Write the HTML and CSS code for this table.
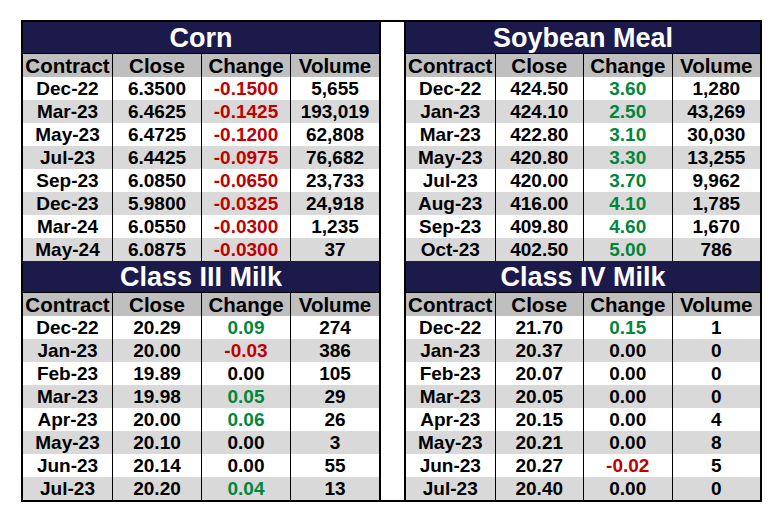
FILE: index.html
```html
<!DOCTYPE html>
<html>
<head>
<meta charset="utf-8">
<link rel="stylesheet" href="styles.css">
</head>
<body>
<div class="board">
  <div class="panel panel-left">
    <section class="grid">
      <div class="title">Corn</div>
      <div class="hd">Contract</div><div class="hd">Close</div><div class="hd">Change</div><div class="hd">Volume</div>
      <div class="c">Dec-22</div><div class="c">6.3500</div><div class="c neg">-0.1500</div><div class="c">5,655</div>
      <div class="c alt">Mar-23</div><div class="c alt">6.4625</div><div class="c alt neg">-0.1425</div><div class="c alt">193,019</div>
      <div class="c">May-23</div><div class="c">6.4725</div><div class="c neg">-0.1200</div><div class="c">62,808</div>
      <div class="c alt">Jul-23</div><div class="c alt">6.4425</div><div class="c alt neg">-0.0975</div><div class="c alt">76,682</div>
      <div class="c">Sep-23</div><div class="c">6.0850</div><div class="c neg">-0.0650</div><div class="c">23,733</div>
      <div class="c alt">Dec-23</div><div class="c alt">5.9800</div><div class="c alt neg">-0.0325</div><div class="c alt">24,918</div>
      <div class="c">Mar-24</div><div class="c">6.0550</div><div class="c neg">-0.0300</div><div class="c">1,235</div>
      <div class="c alt">May-24</div><div class="c alt">6.0875</div><div class="c alt neg">-0.0300</div><div class="c alt">37</div>
    </section>
    <section class="grid">
      <div class="title">Class III Milk</div>
      <div class="hd">Contract</div><div class="hd">Close</div><div class="hd">Change</div><div class="hd">Volume</div>
      <div class="c">Dec-22</div><div class="c">20.29</div><div class="c pos">0.09</div><div class="c">274</div>
      <div class="c alt">Jan-23</div><div class="c alt">20.00</div><div class="c alt neg">-0.03</div><div class="c alt">386</div>
      <div class="c">Feb-23</div><div class="c">19.89</div><div class="c">0.00</div><div class="c">105</div>
      <div class="c alt">Mar-23</div><div class="c alt">19.98</div><div class="c alt pos">0.05</div><div class="c alt">29</div>
      <div class="c">Apr-23</div><div class="c">20.00</div><div class="c pos">0.06</div><div class="c">26</div>
      <div class="c alt">May-23</div><div class="c alt">20.10</div><div class="c alt">0.00</div><div class="c alt">3</div>
      <div class="c">Jun-23</div><div class="c">20.14</div><div class="c">0.00</div><div class="c">55</div>
      <div class="c alt">Jul-23</div><div class="c alt">20.20</div><div class="c alt pos">0.04</div><div class="c alt">13</div>
    </section>
  </div>
  <div class="spacer"></div>
  <div class="panel panel-right">
    <section class="grid">
      <div class="title">Soybean Meal</div>
      <div class="hd">Contract</div><div class="hd">Close</div><div class="hd">Change</div><div class="hd">Volume</div>
      <div class="c">Dec-22</div><div class="c">424.50</div><div class="c pos">3.60</div><div class="c">1,280</div>
      <div class="c alt">Jan-23</div><div class="c alt">424.10</div><div class="c alt pos">2.50</div><div class="c alt">43,269</div>
      <div class="c">Mar-23</div><div class="c">422.80</div><div class="c pos">3.10</div><div class="c">30,030</div>
      <div class="c alt">May-23</div><div class="c alt">420.80</div><div class="c alt pos">3.30</div><div class="c alt">13,255</div>
      <div class="c">Jul-23</div><div class="c">420.00</div><div class="c pos">3.70</div><div class="c">9,962</div>
      <div class="c alt">Aug-23</div><div class="c alt">416.00</div><div class="c alt pos">4.10</div><div class="c alt">1,785</div>
      <div class="c">Sep-23</div><div class="c">409.80</div><div class="c pos">4.60</div><div class="c">1,670</div>
      <div class="c alt">Oct-23</div><div class="c alt">402.50</div><div class="c alt pos">5.00</div><div class="c alt">786</div>
    </section>
    <section class="grid">
      <div class="title">Class IV Milk</div>
      <div class="hd">Contract</div><div class="hd">Close</div><div class="hd">Change</div><div class="hd">Volume</div>
      <div class="c">Dec-22</div><div class="c">21.70</div><div class="c pos">0.15</div><div class="c">1</div>
      <div class="c alt">Jan-23</div><div class="c alt">20.37</div><div class="c alt">0.00</div><div class="c alt">0</div>
      <div class="c">Feb-23</div><div class="c">20.07</div><div class="c">0.00</div><div class="c">0</div>
      <div class="c alt">Mar-23</div><div class="c alt">20.05</div><div class="c alt">0.00</div><div class="c alt">0</div>
      <div class="c">Apr-23</div><div class="c">20.15</div><div class="c">0.00</div><div class="c">4</div>
      <div class="c alt">May-23</div><div class="c alt">20.21</div><div class="c alt">0.00</div><div class="c alt">8</div>
      <div class="c">Jun-23</div><div class="c">20.27</div><div class="c neg">-0.02</div><div class="c">5</div>
      <div class="c alt">Jul-23</div><div class="c alt">20.40</div><div class="c alt">0.00</div><div class="c alt">0</div>
    </section>
  </div>
</div>
</body>
</html>
```
FILE: styles.css
```css
html, body {
  margin: 0;
  padding: 0;
  background: #ffffff;
}
body {
  font-family: "Liberation Sans", Arial, sans-serif;
  font-weight: bold;
  color: #000000;
}
.board {
  display: flex;
  width: 737px;
  margin: 20px 0 0 21px;
  border: 2px solid #000000;
}
.panel {
  display: flex;
  flex-direction: column;
}
.panel-left { width: 356px; }
.panel-right { width: 354px; }
.spacer {
  width: 23px;
  border-left: 2px solid #000000;
  border-right: 2px solid #000000;
  background: #ffffff;
}
.grid {
  display: grid;
  grid-template-columns: repeat(4, 1fr);
  grid-template-rows: 32px;
  grid-auto-rows: 23px;
}
.title {
  grid-column: 1 / span 4;
  box-sizing: border-box;
  height: 32px;
  line-height: 32px;
  background: #1b1a4a;
  border-bottom: 1px solid #000000;
  color: #ffffff;
  font-size: 27px;
  text-align: center;
}
.hd, .c {
  text-align: center;
  line-height: 24px;
  white-space: nowrap;
  overflow: hidden;
  border-left: 1px solid #000000;
}
.hd:nth-child(4n+2), .c:nth-child(4n+2) {
  border-left: none;
}
.hd {
  background: #bfbfbf;
  font-size: 20.5px;
}
.c {
  background: #ffffff;
  font-size: 19px;
}
.c.alt { background: #d9d9d9; }
.neg { color: #c00000; }
.pos { color: #00873c; }
```
